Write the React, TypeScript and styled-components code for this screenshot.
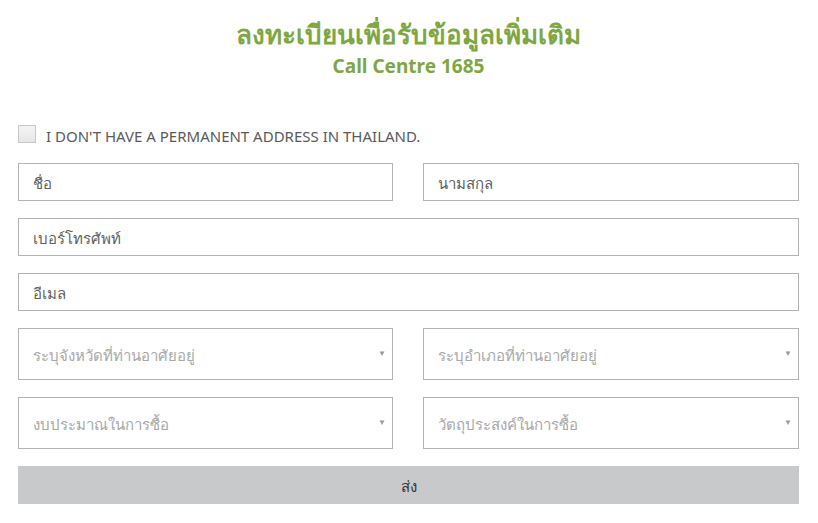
import React from "react";
import styled, { createGlobalStyle } from "styled-components";

const Global = createGlobalStyle`
  html, body { margin: 0; padding: 0; background: #fff; }
  body { font-family: "Noto Sans", "Liberation Sans", sans-serif; }
  * { box-sizing: border-box; }
`;

const Page = styled.div`
  width: 818px;
  padding: 16px 19px 0 18px;
`;

const Header = styled.header`
  display: flex;
  flex-direction: column;
  align-items: center;
  color: #7ea742;
  font-weight: 700;
`;

const Title = styled.h1`
  margin: 0;
  font-size: 26px;
  line-height: 37px;
  font-weight: 700;
`;

const Sub = styled.div`
  font-size: 19px;
  line-height: 26px;
`;

const Form = styled.form`
  margin-top: 46px;
  display: flex;
  flex-direction: column;
  gap: 17px;
`;

const CheckRow = styled.label`
  display: flex;
  align-items: center;
  gap: 10px;
  color: #5a5a5a;
  font-size: 15px;
  text-transform: uppercase;
  height: 18px;
  margin-bottom: 3px;
`;

const Text = styled.span`
  padding-top: 4px;
`;

const Box = styled.span`
  width: 18px;
  height: 18px;
  border: 1px solid #c8c8c8;
  background: linear-gradient(#f4f4f4, #e6e6e6);
`;

const Row = styled.div<{ $cols: number }>`
  display: grid;
  grid-template-columns: ${(p) => (p.$cols === 2 ? "375px 1fr" : "1fr")};
  column-gap: 30px;
`;

const Input = styled.div`
  height: 38px;
  border: 1px solid #b3b3b3;
  display: flex;
  align-items: center;
  padding: 3px 0 0 14px;
  color: #5f5f5f;
  font-size: 15px;
`;

const Select = styled.div`
  height: 52px;
  border: 1px solid #b3b3b3;
  display: flex;
  align-items: center;
  justify-content: space-between;
  padding: 3px 6px 0 14px;
  color: #a8a8a8;
  font-size: 15px;
`;

const Caret = styled.span`
  font-size: 8px;
  color: #999;
  margin-top: -6px;
`;

const Button = styled.button`
  height: 38px;
  border: none;
  background: #c8c9cb;
  color: #333;
  font-family: inherit;
  font-size: 15px;
  padding-top: 4px;
`;

export default function App() {
  return (
    <Page>
      <Global />
      <Header>
        <Title>ลงทะเบียนเพื่อรับข้อมูลเพิ่มเติม</Title>
        <Sub>Call Centre 1685</Sub>
      </Header>
      <Form onSubmit={(e) => e.preventDefault()}>
        <CheckRow>
          <Box />
          <Text>I don't have a permanent address in Thailand.</Text>
        </CheckRow>
        <Row $cols={2}>
          <Input>ชื่อ</Input>
          <Input>นามสกุล</Input>
        </Row>
        <Row $cols={1}>
          <Input>เบอร์โทรศัพท์</Input>
        </Row>
        <Row $cols={1}>
          <Input>อีเมล</Input>
        </Row>
        <Row $cols={2}>
          <Select>ระบุจังหวัดที่ท่านอาศัยอยู่<Caret>▼</Caret></Select>
          <Select>ระบุอำเภอที่ท่านอาศัยอยู่<Caret>▼</Caret></Select>
        </Row>
        <Row $cols={2}>
          <Select>งบประมาณในการซื้อ<Caret>▼</Caret></Select>
          <Select>วัตถุประสงค์ในการซื้อ<Caret>▼</Caret></Select>
        </Row>
        <Button type="submit">ส่ง</Button>
      </Form>
    </Page>
  );
}
